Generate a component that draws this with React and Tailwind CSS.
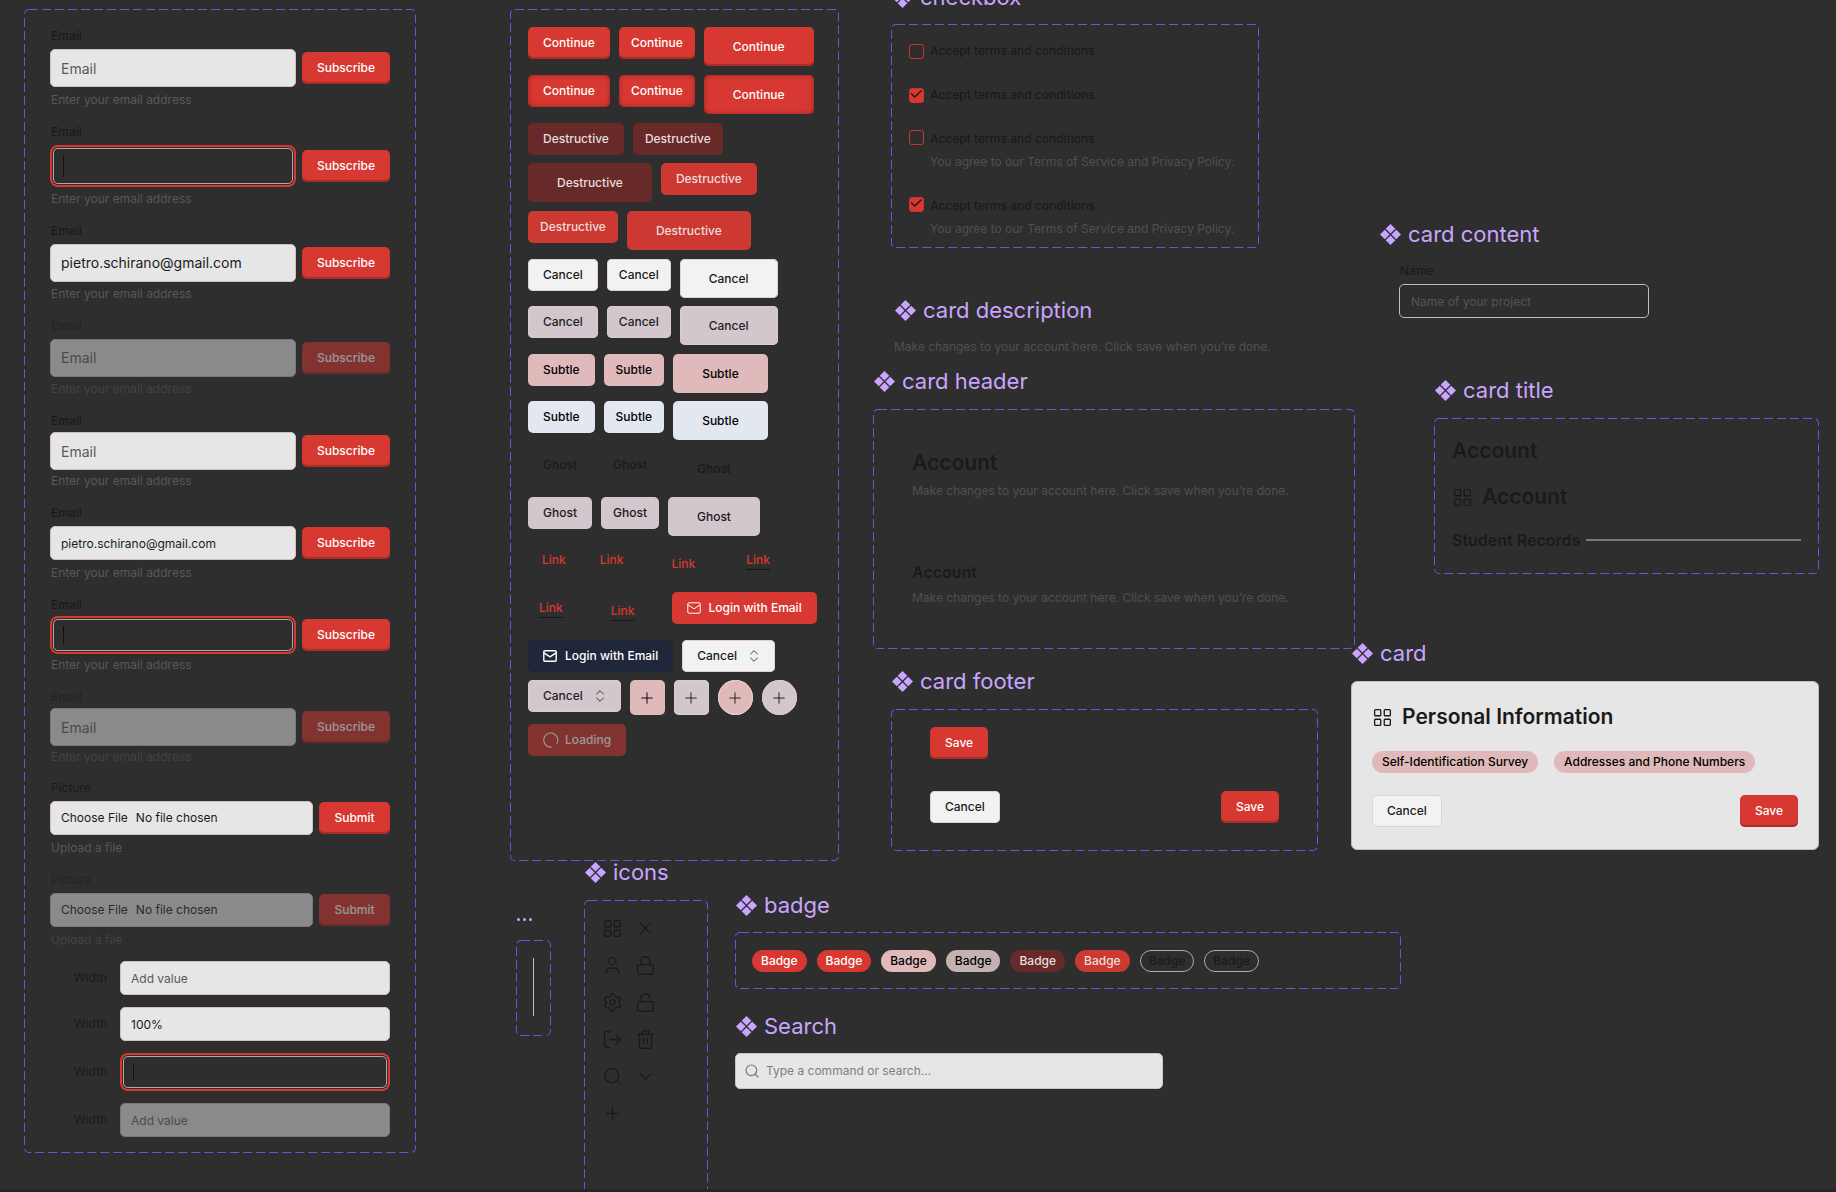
import React, { useId } from 'react';
import {
  LayoutGrid,
  X,
  User,
  Lock,
  Settings,
  LockOpen,
  LogOut,
  Trash2,
  Search,
  ChevronDown,
  Plus,
  ChevronsUpDown,
} from 'lucide-react';

/* Canvas primitives */

function ComponentMark() {
  return (
    <svg viewBox="0 0 21 21" className="size-[21px] shrink-0 fill-current" aria-hidden="true">
      <path d="M10.5 0 15.3 4.8 10.5 9.6 5.7 4.8Z" />
      <path d="M10.5 11.4 15.3 16.2 10.5 21 5.7 16.2Z" />
      <path d="M4.8 5.7 9.6 10.5 4.8 15.3 0 10.5Z" />
      <path d="M16.2 5.7 21 10.5 16.2 15.3 11.4 10.5Z" />
    </svg>
  );
}

function Title({ children }) {
  return (
    <h2 className="flex h-7 items-center gap-[7px] pl-px text-[22px] leading-7 font-normal whitespace-nowrap text-[#c9a5ff]">
      <ComponentMark />
      {children}
    </h2>
  );
}

function Frame({ children, className = '' }) {
  return (
    <div className={`relative ${className}`}>
      <svg className="pointer-events-none absolute inset-0 size-full overflow-hidden rounded-[5px]" aria-hidden="true">
        <rect width="100%" height="100%" rx="5" fill="none" stroke="#8048e0" strokeWidth="2" strokeDasharray="9 4" />
      </svg>
      {children}
    </div>
  );
}

/* Buttons */

const sizes = {
  md: 'h-8 px-[15px]',
  sm: 'h-8 px-3',
  lg: 'h-[39px] px-[29px]',
  icon: 'size-[35px]',
};

const linkSizes = {
  md: 'h-8 px-[14px]',
  sm: 'h-8 px-[11px]',
  lg: 'h-[39px] px-7',
};

const variants = {
  primary: 'rounded-[5px] bg-[#d73831] text-white shadow-[inset_0_-2px_1px_#a92c29]',
  primaryHover: 'rounded-[5px] bg-[#d73831] text-white shadow-[inset_0_0_5px_#8f2522]',
  plain: 'rounded-[5px] bg-[#d73831] text-white',
  destructive: 'rounded-[5px] bg-[#682a28] text-[#e6dede]',
  destructiveHover: 'rounded-[5px] bg-[#cb3932] text-[#f0dcdb]',
  outline: 'rounded-[5px] bg-[#f2f2f2] text-[#1a1a1a] shadow-[inset_0_0_0_1px_#e3cfcf]',
  outlineHover: 'rounded-[5px] bg-[#d1c7cc] text-[#1f1f1f] shadow-[inset_0_0_0_1px_#ddcaca]',
  subtle: 'rounded-[5px] bg-[#e0b9ba] text-black',
  subtleHover: 'rounded-[5px] bg-[#e2e7f0] text-black',
  ghost: 'rounded-[5px] text-[#1a1a1a]',
  ghostHover: 'rounded-[5px] bg-[#d1c7cc] text-[#1a1a1a]',
  navy: 'rounded-[5px] bg-[#20273a] text-white',
  roundSubtle: 'rounded-full bg-[#e0b9ba] text-[#1a1a1a] shadow-[inset_0_0_0_1px_#e8cccc]',
  roundHover: 'rounded-full bg-[#d1c7cc] text-[#1a1a1a] shadow-[inset_0_0_0_1px_#ddcaca]',
};

function Button({ variant = 'primary', size = 'md', className = '', children, ...rest }) {
  return (
    <button
      type="button"
      className={`flex shrink-0 items-center justify-center text-[12px] leading-[18px] font-medium whitespace-nowrap ${sizes[size]} ${variants[variant]} ${className}`}
      {...rest}
    >
      {children}
    </button>
  );
}

function TextLink({ size = 'md', underlined = false }) {
  return (
    <a
      href="#link"
      className={`flex shrink-0 items-center text-[12px] leading-[18px] font-medium text-[#d73831] ${linkSizes[size]}`}
    >
      <span className={underlined ? 'border-b border-[#151515]' : ''}>Link</span>
    </a>
  );
}

function ButtonRow({ children, className = 'h-12' }) {
  return <div className={`flex items-start gap-[9px] ${className}`}>{children}</div>;
}

function Trio({ variant, label, className }) {
  return (
    <ButtonRow className={className}>
      <Button variant={variant}>{label}</Button>
      <Button variant={variant} size="sm">{label}</Button>
      <Button variant={variant} size="lg">{label}</Button>
    </ButtonRow>
  );
}

function Envelope({ strokeWidth = 1 }) {
  return (
    <svg viewBox="0 0 14 12" className="h-3 w-[14px] fill-none stroke-current" strokeWidth={strokeWidth} strokeLinejoin="round" aria-hidden="true">
      <rect x="0.8" y="0.8" width="12.4" height="10.4" rx="1" />
      <path d="M1 2.8 7 6.8 13 2.8" />
    </svg>
  );
}

function Spinner() {
  return (
    <svg viewBox="0 0 16 16" className="size-4 fill-none stroke-current" strokeWidth="1.2" strokeLinecap="round" aria-hidden="true">
      <path d="M14 11.2A7 7 0 1 0 8.4 15" />
    </svg>
  );
}

function AddIcon() {
  return <Plus size={18} strokeWidth={1.25} />;
}

function SortIcon() {
  return <ChevronsUpDown size={16} strokeWidth={1.25} className="-mr-0.5" />;
}

function ButtonPanel() {
  return (
    <Frame className="flex h-[852px] w-[329px] flex-col pt-[18px] pl-[18px]">
      <Trio variant="primary" label="Continue" />
      <Trio variant="primaryHover" label="Continue" />
      <ButtonRow className="h-10">
        <Button variant="destructive">Destructive</Button>
        <Button variant="destructive" size="sm">Destructive</Button>
      </ButtonRow>
      <ButtonRow>
        <Button variant="destructive" size="lg">Destructive</Button>
        <Button variant="destructiveHover">Destructive</Button>
      </ButtonRow>
      <ButtonRow>
        <Button variant="destructiveHover" size="sm">Destructive</Button>
        <Button variant="destructiveHover" size="lg">Destructive</Button>
      </ButtonRow>
      <Trio variant="outline" label="Cancel" className="h-[47px]" />
      <Trio variant="outlineHover" label="Cancel" />
      <Trio variant="subtle" label="Subtle" className="h-[47px]" />
      <Trio variant="subtleHover" label="Subtle" />
      <Trio variant="ghost" label="Ghost" />
      <Trio variant="ghostHover" label="Ghost" className="h-[47px]" />
      <ButtonRow>
        <TextLink />
        <TextLink size="sm" />
        <TextLink size="lg" />
        <TextLink underlined />
      </ButtonRow>
      <ButtonRow>
        <TextLink size="sm" underlined />
        <TextLink size="lg" underlined />
        <Button variant="plain" className="gap-2">
          <Envelope />
          Login with Email
        </Button>
      </ButtonRow>
      <ButtonRow className="h-10">
        <Button variant="navy" className="gap-2">
          <Envelope strokeWidth={1.4} />
          Login with Email
        </Button>
        <Button variant="outline" className="gap-[9px]">
          Cancel
          <SortIcon />
        </Button>
      </ButtonRow>
      <ButtonRow className="h-11">
        <Button variant="outlineHover" className="gap-[9px]">
          Cancel
          <SortIcon />
        </Button>
        <Button variant="subtle" size="icon" aria-label="Add"><AddIcon /></Button>
        <Button variant="outlineHover" size="icon" aria-label="Add"><AddIcon /></Button>
        <Button variant="roundSubtle" size="icon" aria-label="Add"><AddIcon /></Button>
        <Button variant="roundHover" size="icon" aria-label="Add"><AddIcon /></Button>
      </ButtonRow>
      <ButtonRow>
        <Button variant="plain" disabled className="gap-[6px] opacity-50">
          <Spinner />
          Loading
        </Button>
      </ButtonRow>
    </Frame>
  );
}

/* Form fields */

const inputBase = 'w-full min-w-0 rounded-[5px] border px-[10px] outline-none';
const inputStates = {
  normal: 'border-[#d3bfc0] bg-[#e6e6e6] text-[#1a1a1a] placeholder:text-[#5a5a5a]',
  focus:
    'border-[#b9a5a5] bg-transparent text-[#1a1a1a] ring-2 ring-[#d73831] ring-offset-1 ring-offset-[#2e2e2e]',
  disabled: 'border-[#7d7576] bg-[#8a8a8a] text-[#2b2b2b] placeholder:text-[#4a4a4a]',
};

function TextInput({ id, state = 'normal', small = false, textClass = 'text-[14px]', placeholder, value }) {
  const focused = state === 'focus';
  const height = focused ? (small ? 'h-8' : 'h-9') : small ? 'h-[34px]' : 'h-[38px]';
  const box = (
    <input
      id={id}
      className={`${inputBase} ${inputStates[state]} ${height} ${textClass}`}
      placeholder={placeholder}
      defaultValue={value}
      disabled={state === 'disabled'}
    />
  );
  if (!focused) return <div className="flex flex-1">{box}</div>;
  return (
    <div className="flex flex-1 p-[3px]">
      <div className="relative flex flex-1 items-center">
        {box}
        <span className={`absolute left-[10px] w-px bg-[#111] ${small ? 'h-[18px]' : 'h-[22px]'}`} />
      </div>
    </div>
  );
}

function EmailField({ state = 'normal', rowClass = 'h-[42px]', small, textClass, placeholder, value }) {
  const id = useId();
  const faded = state === 'disabled' ? 'opacity-50' : '';
  return (
    <div className="text-[12px] leading-[18px]">
      <label htmlFor={id} className={`block pl-px font-medium text-[#1a1a1a] ${faded}`}>Email</label>
      <div className={`flex items-center gap-[6px] ${rowClass}`}>
        <TextInput id={id} state={state} small={small} textClass={textClass} placeholder={placeholder} value={value} />
        <Button className={`w-[88px] ${faded}`} disabled={state === 'disabled'}>Subscribe</Button>
      </div>
      <p className={`pl-px text-[#585858] ${faded}`}>Enter your email address</p>
    </div>
  );
}

function FileField({ disabled = false }) {
  const id = useId();
  const faded = disabled ? 'opacity-50' : '';
  return (
    <div className="text-[12px] leading-[18px]">
      <label htmlFor={id} className={`block pl-px text-[#1a1a1a] ${faded}`}>Picture</label>
      <div className="flex h-[42px] items-center gap-[6px]">
        <input
          id={id}
          type="file"
          disabled={disabled}
          className={`${inputBase} h-[34px] flex-1 py-[7px] text-[12px] leading-[18px] file:mr-2 file:border-0 file:bg-transparent file:p-0 file:text-[12px] file:text-inherit ${disabled ? inputStates.disabled : inputStates.normal}`}
        />
        <Button className={`w-[71px] ${faded}`} disabled={disabled}>Submit</Button>
      </div>
      <p className={`pl-px text-[#585858] ${faded}`}>Upload a file</p>
    </div>
  );
}

function WidthField({ state, placeholder, value }) {
  const id = useId();
  return (
    <div className="flex items-center gap-[13px]">
      <label htmlFor={id} className="w-[57px] text-right text-[12px] leading-[18px] text-[#1a1a1a]">Width</label>
      <TextInput id={id} state={state} small textClass="text-[12px]" placeholder={placeholder} value={value} />
    </div>
  );
}

function FormPanel() {
  return (
    <Frame className="flex w-[392px] flex-col px-[26px] pt-[18px] pb-4">
      <div className="flex flex-col gap-[14px]">
        <EmailField rowClass="h-[46px]" placeholder="Email" />
        <EmailField rowClass="h-[49px]" state="focus" />
        <EmailField rowClass="h-[45px]" value="pietro.schirano@gmail.com" />
        <EmailField rowClass="h-[45px]" state="disabled" placeholder="Email" />
        <EmailField placeholder="Email" />
        <EmailField value="pietro.schirano@gmail.com" small textClass="text-[12px]" />
        <EmailField state="focus" small />
        <EmailField state="disabled" placeholder="Email" />
      </div>
      <div className="mt-[13px] flex flex-col gap-[14px]">
        <FileField />
        <FileField disabled />
      </div>
      <div className="mt-3 flex flex-col gap-3">
        <WidthField placeholder="Add value" />
        <WidthField value="100%" />
        <WidthField state="focus" />
        <WidthField state="disabled" placeholder="Add value" />
      </div>
    </Frame>
  );
}

/* Checkboxes */

function Checkbox({ checked = false, description = false }) {
  const id = useId();
  return (
    <div className="flex items-start gap-[6px] text-[12px] leading-[18px]">
      <span className={`relative flex size-[15px] shrink-0 ${description ? '' : 'mt-0.5'}`}>
        <input
          id={id}
          type="checkbox"
          defaultChecked={checked}
          className="size-[15px] appearance-none rounded-[3px] border border-[#c9352f] checked:bg-[#d73831]"
        />
        {checked && (
          <svg viewBox="0 0 15 15" className="pointer-events-none absolute inset-0 fill-none stroke-[#2a1010]" strokeWidth="1.4" aria-hidden="true">
            <path d="M2.2 5.6 5.6 9 12.6 2.4" />
          </svg>
        )}
      </span>
      <div className="flex flex-col gap-[5px]">
        <label htmlFor={id} className="font-medium text-[#1a1a1a]">Accept terms and conditions</label>
        {description && <p className="text-[#505050]">You agree to our Terms of Service and Privacy Policy.</p>}
      </div>
    </div>
  );
}

/* Cards */

function Description() {
  return (
    <p className="text-[12px] leading-[18px] whitespace-nowrap text-[#505050]">
      Make changes to your account here. Click save when you’re done.
    </p>
  );
}

const iconClass = 'size-[21px]';

function Heading({ children, icon = false }) {
  return (
    <h3 className="flex h-7 items-center gap-[9px] text-[21px] leading-7 font-semibold text-[#1a1a1a]">
      {icon && <LayoutGrid className={iconClass} strokeWidth={1.5} />}
      {children}
    </h3>
  );
}

function Badge({ className = '', children = 'Badge' }) {
  return (
    <span className={`flex h-[22px] items-center rounded-full text-[12px] leading-4 font-medium whitespace-nowrap ${className}`}>
      {children}
    </span>
  );
}

function NameField() {
  const id = useId();
  return (
    <div className="mt-[14px] ml-5 w-[250px] text-[12px] leading-[18px]">
      <label htmlFor={id} className="block pl-px font-medium text-[#1a1a1a]">Name</label>
      <input
        id={id}
        placeholder="Name of your project"
        className="mt-1 block h-[34px] w-full rounded-[5px] border border-[#c9b8b8] bg-transparent px-[11px] text-[12px] text-[#1a1a1a] outline-none placeholder:text-[#555]"
      />
    </div>
  );
}

const iconGrid = [LayoutGrid, X, User, Lock, Settings, LockOpen, LogOut, Trash2, Search, ChevronDown, Plus];

export default function App() {
  return (
    <main className="relative h-screen w-full overflow-hidden bg-[#2e2e2e] font-['Inter',sans-serif] text-[#1a1a1a]">
      <section className="absolute top-[9px] left-[24px]">
        <FormPanel />
      </section>

      <section className="absolute top-[9px] left-[510px]">
        <ButtonPanel />
      </section>

      <section className="absolute top-[-17px] left-[891px]">
        <Title>checkbox</Title>
        <Frame className="mt-[13px] flex w-[368px] flex-col gap-[26px] pt-[18px] pb-[10px] pl-[18px]">
          <Checkbox />
          <Checkbox checked />
          <Checkbox description />
          <Checkbox checked description />
        </Frame>
      </section>

      <section className="absolute top-[296px] left-[894px]">
        <Title>card description</Title>
        <div className="mt-[14px]">
          <Description />
        </div>
      </section>

      <section className="absolute top-[367px] left-[873px]">
        <Title>card header</Title>
        <Frame className="mt-[14px] h-[240px] w-[482px] pt-10 pl-[39px]">
          <Heading>Account</Heading>
          <div className="mt-[5px]"><Description /></div>
          <h3 className="mt-[60px] text-[16px] leading-6 font-semibold">Account</h3>
          <div className="mt-[5px]"><Description /></div>
        </Frame>
      </section>

      <section className="absolute top-[667px] left-[891px]">
        <Title>card footer</Title>
        <Frame className="mt-[14px] flex h-[142px] w-[427px] flex-col gap-8 px-[39px] pt-[18px]">
          <div className="flex">
            <Button>Save</Button>
          </div>
          <div className="flex justify-between">
            <Button variant="outline">Cancel</Button>
            <Button>Save</Button>
          </div>
        </Frame>
      </section>

      <section className="absolute top-[220px] left-[1379px]">
        <Title>card content</Title>
        <NameField />
      </section>

      <section className="absolute top-[376px] left-[1434px]">
        <Title>card title</Title>
        <Frame className="mt-[14px] flex h-[156px] w-[385px] flex-col px-[18px] pt-[19px]">
          <Heading>Account</Heading>
          <div className="mt-[18px]"><Heading icon>Account</Heading></div>
          <div className="mt-[17px] flex items-center gap-[6px]">
            <h3 className="text-[16px] leading-6 font-semibold whitespace-nowrap">Student Records</h3>
            <hr className="h-0.5 flex-1 border-0 bg-[#7f7977]" />
          </div>
        </Frame>
      </section>

      <section className="absolute top-[639px] left-[1351px]">
        <Title>card</Title>
        <div className="mt-[14px] flex w-[468px] flex-col rounded-md border border-[#c9b8b8] bg-[#e6e6e6] px-5 pt-[21px] pb-[22px]">
          <Heading icon>Personal Information</Heading>
          <div className="mt-5 flex gap-4">
            <Badge className="bg-[#e0b9ba] px-[10px] text-black">Self-Identification Survey</Badge>
            <Badge className="bg-[#e0b9ba] px-[10px] text-black">Addresses and Phone Numbers</Badge>
          </div>
          <div className="mt-[22px] flex justify-between">
            <Button variant="outline">Cancel</Button>
            <Button>Save</Button>
          </div>
        </div>
      </section>

      <section className="absolute top-[858px] left-[584px]">
        <Title>icons</Title>
        <Frame className="mt-[14px] h-[320px] w-[124px] pt-[18px] pl-[18px]">
          <ul className="grid w-[54px] grid-cols-2 gap-x-3 gap-y-4">
            {iconGrid.map((Icon, i) => (
              <li key={i}>
                <Icon className={iconClass} strokeWidth={1.5} />
              </li>
            ))}
          </ul>
        </Frame>
      </section>

      <section className="absolute top-[905px] left-[516px]">
        <h2 className="flex h-7 items-center gap-[3px] pl-px" aria-label="separator">
          <span className="size-[3px] rounded-full bg-[#c9a5ff]" />
          <span className="size-[3px] rounded-full bg-[#c9a5ff]" />
          <span className="size-[3px] rounded-full bg-[#c9a5ff]" />
        </h2>
        <Frame className="mt-[7px] flex h-[96px] w-[35px] justify-center pt-[18px] pb-5">
          <span className="w-px bg-[#c9b8b8]" />
        </Frame>
      </section>

      <section className="absolute top-[891px] left-[735px]">
        <Title>badge</Title>
        <Frame className="mt-[13px] flex h-[57px] w-[666px] items-center gap-[10px] pl-[17px]">
          <Badge className="bg-[#d73831] px-[9px] text-white" />
          <Badge className="bg-[#d73831] px-[9px] text-white" />
          <Badge className="bg-[#e0b9ba] px-[9px] text-black" />
          <Badge className="bg-[#c4b1b2] px-[9px] text-black" />
          <Badge className="bg-[#682a28] px-[9px] text-[#e6dede]" />
          <Badge className="bg-[#cb3932] px-[9px] text-[#f0dcdb]" />
          <Badge className="border border-[#b5a8a8] px-2 text-[#1a1a1a]" />
          <Badge className="border border-[#b5a8a8] px-2 text-[#1a1a1a]" />
        </Frame>
      </section>

      <section className="absolute top-[1012px] left-[735px]">
        <Title>Search</Title>
        <label className="mt-[13px] flex h-9 w-[428px] items-center gap-[6px] rounded-[5px] border border-[#d3bfc0] bg-[#e6e6e6] px-2 text-[#7d7373]">
          <Search size={16} strokeWidth={1.75} aria-hidden="true" />
          <input
            type="text"
            aria-label="Search"
            placeholder="Type a command or search..."
            className="min-w-0 flex-1 bg-transparent text-[12px] leading-[18px] outline-none placeholder:text-[#857c7c]"
          />
        </label>
      </section>

      <div className="absolute inset-x-0 bottom-0 h-[3px] bg-[#272727]" />
    </main>
  );
}
